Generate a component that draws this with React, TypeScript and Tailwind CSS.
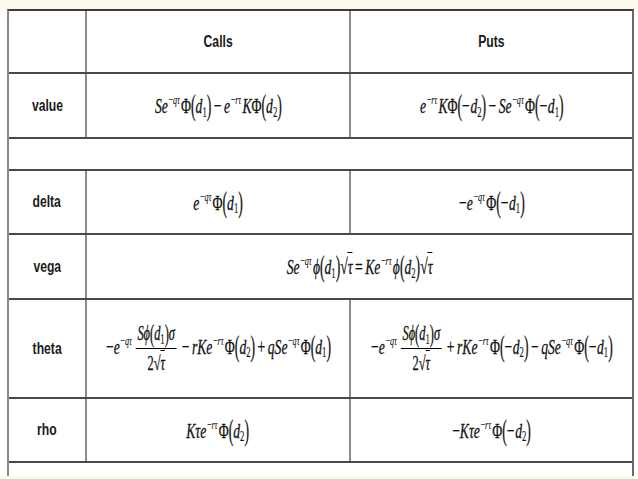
import type { ReactNode } from 'react'

// ─── Math helpers ─────────────────────────────────────────────────────────────

const I = ({ children }: { children: ReactNode }) => <i className="italic">{children}</i>

const Exp = ({ v }: { v: 'q' | 'r' }) => (
  <sup className="text-[13px] ml-[1px] mr-[2px] -top-[0.68em] [-webkit-text-stroke:0.1px_#111]">
    −<i>{v}</i><i>τ</i>
  </sup>
)

const P = ({ children }: { children: ReactNode }) => (
  <>
    <span className="inline-block scale-y-[1.3]">(</span>
    {children}
    <span className="inline-block scale-y-[1.3]">)</span>
  </>
)

const D = ({ n, neg }: { n: 1 | 2; neg?: boolean }) => (
  <P>
    {neg && <span className="mr-[1px]">−</span>}
    <I>d</I>
    <sub className="text-[14px] not-italic [-webkit-text-stroke:0.15px_#111]">{n}</sub>
  </P>
)

const Sqrt = () => (
  <span className="whitespace-nowrap">
    √<span className="border-t border-black italic pt-[1px]">τ</span>
  </span>
)

const Op = ({ c }: { c: string }) => <span className="mx-[4px]">{c}</span>

const Frac = () => (
  <span className="inline-flex flex-col items-center align-middle mx-[4px] text-[20px] leading-[1.45]">
    <span className="px-[3px] border-b-[1.5px] border-black">
      <I>S</I><I>ϕ</I><D n={1} /><I>σ</I>
    </span>
    <span>
      2<Sqrt />
    </span>
  </span>
)

function Formula({ children }: { children: ReactNode }) {
  return (
    <span className="inline-block whitespace-nowrap scale-x-[0.62] text-[22px] text-[#111] font-['Liberation_Serif',serif] [-webkit-text-stroke:0.3px_#111]">
      {children}
    </span>
  )
}

// ─── Table pieces ─────────────────────────────────────────────────────────────

const sans = "font-['Liberation_Sans',Arial,sans-serif] font-bold text-[16px] text-[#1a1a1a]"

function Label({ children }: { children?: ReactNode }) {
  return (
    <div className={`flex w-[78px] shrink-0 items-center justify-center border-r-2 border-[#8a8a8a] ${sans}`}>
      <span className="inline-block scale-x-[0.76]">{children}</span>
    </div>
  )
}

function Head({ children }: { children: ReactNode }) {
  return <span className={`inline-block scale-x-[0.76] ${sans}`}>{children}</span>
}

function Row({ h, children }: { h: string; children: ReactNode }) {
  return <div className={`flex border-b-2 border-[#4a4a4a] ${h}`}>{children}</div>
}

function Cell({ children, last }: { children?: ReactNode; last?: boolean }) {
  return (
    <div
      className={
        last
          ? 'flex min-w-0 flex-1 items-center justify-center'
          : 'flex w-[264px] min-w-0 shrink-0 items-center justify-center border-r-2 border-[#8a8a8a]'
      }
    >
      {children}
    </div>
  )
}

export default function App() {
  return (
    <div className="flex h-[479px] w-[638px] flex-col overflow-hidden bg-white">
      <div className="h-[9px] shrink-0 bg-[#fcf9ee]" />

      <div className="ml-[7px] flex w-[627px] flex-1 flex-col border-x-2 border-t-2 border-l-[#8a8a8a] border-r-[#6a6a6a] border-t-[#3a3a3a]">
        {/* Header */}
        <Row h="h-[63px]">
          <Label />
          <Cell>
            <Head>Calls</Head>
          </Cell>
          <Cell last>
            <Head>Puts</Head>
          </Cell>
        </Row>

        {/* value */}
        <Row h="h-[65px]">
          <Label>value</Label>
          <Cell>
            <Formula>
              <I>S</I><I>e</I><Exp v="q" />Φ<D n={1} /><Op c="−" /><I>e</I><Exp v="r" /><I>K</I>Φ<D n={2} />
            </Formula>
          </Cell>
          <Cell last>
            <Formula>
              <I>e</I><Exp v="r" /><I>K</I>Φ<D n={2} neg /><Op c="−" /><I>S</I><I>e</I><Exp v="q" />Φ<D n={1} neg />
            </Formula>
          </Cell>
        </Row>

        {/* spacer */}
        <Row h="h-[32px]">
          <div />
        </Row>

        {/* delta */}
        <Row h="h-[64px]">
          <Label>delta</Label>
          <Cell>
            <Formula>
              <I>e</I><Exp v="q" />Φ<D n={1} />
            </Formula>
          </Cell>
          <Cell last>
            <Formula>
              −<I>e</I><Exp v="q" />Φ<D n={1} neg />
            </Formula>
          </Cell>
        </Row>

        {/* vega */}
        <Row h="h-[65px]">
          <Label>vega</Label>
          <div className="flex min-w-0 flex-1 items-center justify-center">
            <Formula>
              <I>S</I><I>e</I><Exp v="q" /><I>ϕ</I><D n={1} /><Sqrt /><Op c="=" /><I>K</I><I>e</I><Exp v="r" /><I>ϕ</I><D n={2} /><Sqrt />
            </Formula>
          </div>
        </Row>

        {/* theta */}
        <Row h="h-[99px]">
          <Label>theta</Label>
          <Cell>
            <Formula>
              −<I>e</I><Exp v="q" /><Frac /><Op c="−" /><I>r</I><I>K</I><I>e</I><Exp v="r" />Φ<D n={2} /><Op c="+" /><I>q</I><I>S</I><I>e</I><Exp v="q" />Φ<D n={1} />
            </Formula>
          </Cell>
          <Cell last>
            <Formula>
              −<I>e</I><Exp v="q" /><Frac /><Op c="+" /><I>r</I><I>K</I><I>e</I><Exp v="r" />Φ<D n={2} neg /><Op c="−" /><I>q</I><I>S</I><I>e</I><Exp v="q" />Φ<D n={1} neg />
            </Formula>
          </Cell>
        </Row>

        {/* rho */}
        <Row h="h-[64px]">
          <Label>rho</Label>
          <Cell>
            <Formula>
              <I>K</I><I>τ</I><I>e</I><Exp v="r" />Φ<D n={2} />
            </Formula>
          </Cell>
          <Cell last>
            <Formula>
              −<I>K</I><I>τ</I><I>e</I><Exp v="r" />Φ<D n={2} neg />
            </Formula>
          </Cell>
        </Row>

        <div className="flex-1" />
      </div>

      <div className="h-[3px] shrink-0 bg-[#fcf9ee]" />
    </div>
  )
}
